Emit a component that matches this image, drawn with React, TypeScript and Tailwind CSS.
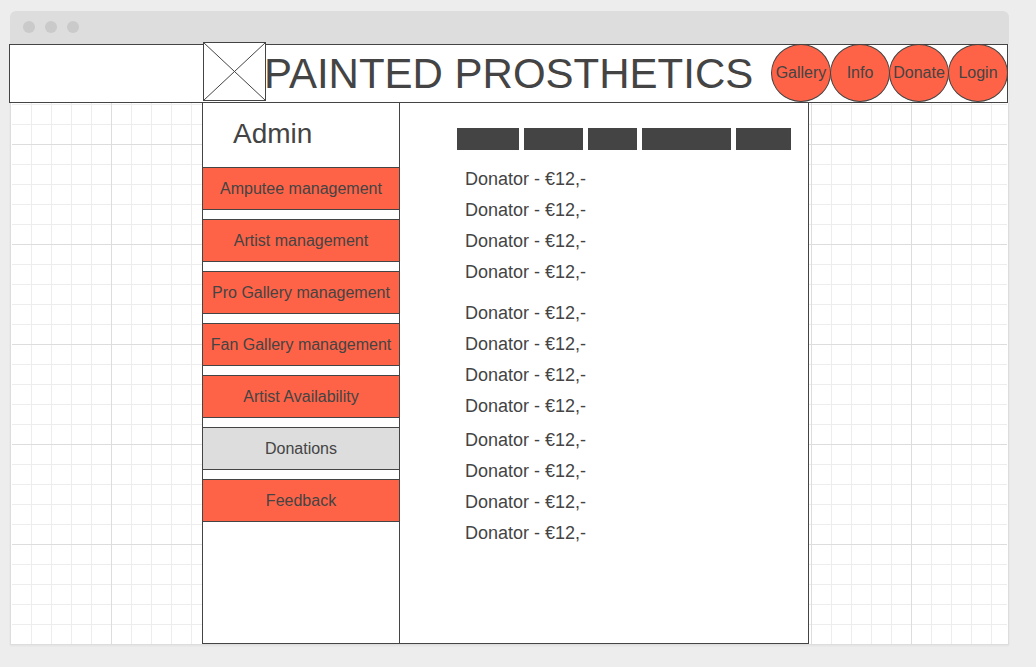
import React from "react";

const navItems = ["Gallery", "Info", "Donate", "Login"];

const adminItems = [
  "Amputee management",
  "Artist management",
  "Pro Gallery management",
  "Fan Gallery management",
  "Artist Availability",
  "Donations",
  "Feedback",
];

const donation = "Donator - €12,-";
const donationGroups = [
  { gap: "mb-[10px]", rows: [donation, donation, donation, donation] },
  { gap: "mb-[3px]", rows: [donation, donation, donation, donation] },
  { gap: "", rows: [donation, donation, donation, donation] },
];

const barWidths = ["w-[62px]", "w-[59px]", "w-[49px]", "w-[89px]", "w-[55px]"];

function TitleBar() {
  return (
    <div className="flex h-[33px] shrink-0 items-start gap-[10px] rounded-t-md bg-[#ddd] px-[13px] pt-[10px]">
      {[0, 1, 2].map((dot) => (
        <span key={dot} className="size-3 rounded-full bg-[#cacaca]" />
      ))}
    </div>
  );
}

function Logo() {
  return (
    <svg
      viewBox="0 0 63 59"
      className="-mt-[3px] h-[59px] w-[63px] shrink-0"
      fill="#fff"
      stroke="#444"
      aria-label="Logo"
      role="img"
    >
      <rect x="0.5" y="0.5" width="62" height="58" />
      <path d="M0.5 0.5 62.5 58.5M62.5 0.5 0.5 58.5" />
    </svg>
  );
}

function Header() {
  return (
    <header className="mr-px -ml-px flex h-[59px] shrink-0 items-start border border-[#444] bg-white pl-[193px]">
      <Logo />
      <h1 className="-ml-0.5 text-[42px] leading-[57px] whitespace-nowrap">PAINTED PROSTHETICS</h1>
      <nav className="-mt-px -mr-px ml-auto flex" aria-label="Main">
        {navItems.map((item) => (
          <a
            key={item}
            href="#"
            className="-ml-px flex h-[58px] w-[60px] items-center justify-center rounded-[50%] border border-[#444] bg-[#ff6347] text-base"
          >
            {item}
          </a>
        ))}
      </nav>
    </header>
  );
}

function Sidebar() {
  return (
    <aside className="w-[198px] shrink-0 border-x border-[#444]">
      <h2 className="h-16 pt-[10px] pl-[30px] text-[28px] leading-[42px]">Admin</h2>
      <div className="flex flex-col gap-[9px]">
        {adminItems.map((item) => (
          <button
            key={item}
            type="button"
            className={
              "h-[43px] border-y border-[#444] text-base whitespace-nowrap " +
              (item === "Donations" ? "bg-[#ddd]" : "bg-[#ff6347]")
            }
          >
            {item}
          </button>
        ))}
      </div>
    </aside>
  );
}

function Donations() {
  return (
    <main className="flex-1 border-r border-[#444] pt-[25px] pl-[57px]">
      <div className="flex gap-[5px]" aria-hidden="true">
        {barWidths.map((width) => (
          <span key={width} className={"h-[22px] bg-[#444] " + width} />
        ))}
      </div>
      <div className="pt-3.5 pl-2">
        {donationGroups.map((group, index) => (
          <ul key={index} className={group.gap}>
            {group.rows.map((row, rowIndex) => (
              <li key={rowIndex} className="text-lg leading-[31px]">
                {row}
              </li>
            ))}
          </ul>
        ))}
      </div>
    </main>
  );
}

export default function App() {
  return (
    <div className="flex min-h-screen flex-col bg-[#ededed] pt-[11px] pr-[27px] pb-[22px] pl-[10px] font-['Liberation_Sans',Arial,sans-serif] text-[#444]">
      <TitleBar />
      <div className="flex flex-1 flex-col shadow-xs">
        <Header />
        <div className="flex flex-1 border-x border-b border-[#ddd] bg-white px-px">
          <div className="flex flex-1 bg-[linear-gradient(to_right,#ddd_1px,transparent_1px),linear-gradient(to_bottom,#ddd_1px,transparent_1px),linear-gradient(to_right,#ededed_1px,transparent_1px),linear-gradient(to_bottom,#ededed_1px,transparent_1px)] bg-[size:100px_100px,100px_100px,20px_20px,20px_20px] bg-[position:99px_41px,99px_41px,19px_1px,19px_1px] pl-[190px]">
            <div className="flex w-[607px] border-b border-l border-[#444] bg-white">
              <div className="-ml-px flex flex-1">
                <Sidebar />
                <Donations />
              </div>
            </div>
          </div>
        </div>
      </div>
    </div>
  );
}
